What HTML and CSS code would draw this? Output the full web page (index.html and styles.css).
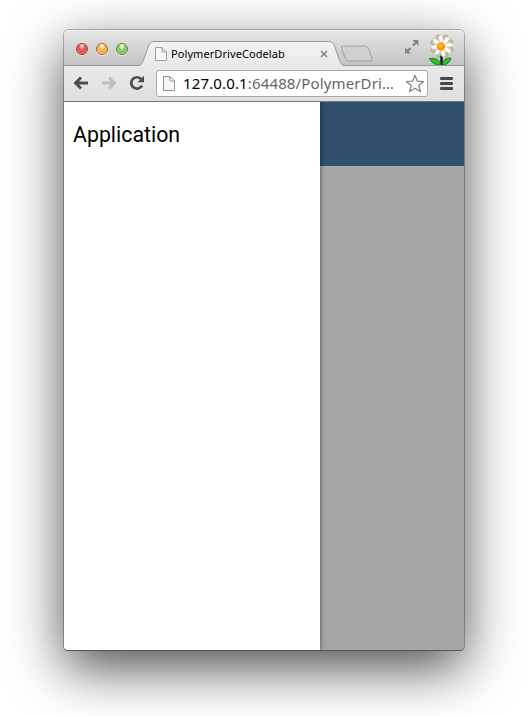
FILE: index.html
```html
<!DOCTYPE html>
<html lang="en">
<head>
<meta charset="utf-8">
<title>PolymerDriveCodelab</title>
<link rel="stylesheet" href="styles.css">
</head>
<body>
<div class="window">
  <header class="tabstrip">
    <div class="lights"><i class="light red"></i><i class="light amber"></i><i class="light green"></i></div>
    <div class="tab">
      <svg class="tab-shape" width="212" height="26" viewBox="0 0 212 26">
        <defs><linearGradient id="tabfill" x2="0" y2="1"><stop stop-color="#f2f2f2"/><stop offset="1" stop-color="#e9e9e9"/></linearGradient></defs>
        <path d="M0 25.5C5 25.5 6 23 7.500 19L12.500 5Q14 .5 18 .5H193Q197 .5 198.500 5L203.500 19C205 23 206 25.500 211 25.500V26H0Z" fill="url(#tabfill)"/>
        <path d="M0 24.500C5 24.500 6 23 7.500 19L12.500 5Q14 .5 18 .5H193Q197 .5 198.500 5L203.500 19C205 23 206 24.500 211 24.500" fill="none" stroke="#999"/>
      </svg>
      <svg class="page-icon" width="12" height="14" viewBox="0 0 12 14"><path d="M.5.500H7L11.500 5V13.500H.5ZM7 .5V5H11.500" fill="#f7f7f7" stroke="#a0a0a0"/></svg>
      <span class="tab-title">PolymerDriveCodelab</span>
      <svg class="close" width="8" height="8" viewBox="0 0 8 8"><path d="M1 1L7 7M7 1L1 7" stroke="#858585" stroke-width="1.600"/></svg>
    </div>
    <svg class="newtab" width="34" height="18" viewBox="0 0 34 18"><path d="M3.500 1H25Q27.500 1 28.500 3.500L32 13.500Q33 16 30 16H9Q6.500 16 5.500 13.500L1.500 3.500Q.5 1 3.500 1Z" fill="#d0d0d0" stroke="#a0a0a0"/></svg>
    <svg class="expand" width="16" height="16" viewBox="0 0 16 16" fill="#858585" stroke="#858585"><path d="M8.500 1H14.500V7ZM1 8.500V14.500H7Z" stroke="none"/><path d="M9 6.500L12 3.500M3 12.500L6.500 9" stroke-width="2.400"/></svg>
    <svg class="flower" width="26" height="31" viewBox="0 0 26 31">
      <path d="M12.500 18V31" stroke="#0c2210" stroke-width="2.500"/>
      <path d="M12 31Q10 23 .5 24.500Q3 31 12 31ZM13.500 31Q14 23.500 22 24Q20 31 13.500 31Z" fill="#2cc32a" stroke="#136b1a" stroke-width=".8"/>
      <g fill="#d3c4a6" stroke="#8f8165" stroke-width=".5" transform="rotate(22 13 12)"><g id="petals"><ellipse cx="13" cy="4.700" rx="2.500" ry="4.600"/><ellipse cx="13" cy="19.300" rx="2.500" ry="4.600"/><ellipse cx="5.700" cy="12" rx="4.600" ry="2.500"/><ellipse cx="20.300" cy="12" rx="4.600" ry="2.500"/></g><use href="#petals" transform="rotate(45 13 12)"/></g>
      <g fill="#fff" stroke="#b3a68c" stroke-width=".4" transform="rotate(-8 13 12)"><g id="front"><ellipse cx="13" cy="6" rx="2.200" ry="5.200"/><ellipse cx="13" cy="18" rx="2.200" ry="5.200"/><ellipse cx="7" cy="12" rx="5.200" ry="2.200"/><ellipse cx="19" cy="12" rx="5.200" ry="2.200"/></g><use href="#front" transform="rotate(45 13 12)"/></g>
      <circle cx="12" cy="12.500" r="4.200" fill="#ff930a"/><circle cx="11.400" cy="11.600" r="2.200" fill="#ffb53a"/>
    </svg>
  </header>
  <nav class="toolbar">
    <svg class="back" width="16" height="14" viewBox="0 0 16 14"><path d="M15 7H2.500M8 1.500L2.500 7L8 12.500" fill="none" stroke="#4c4c4c" stroke-width="2.800"/></svg>
    <svg class="forward" width="16" height="14" viewBox="0 0 16 14"><path d="M1 7H13.500M8 1.500L13.500 7L8 12.500" fill="none" stroke="#bdbdbd" stroke-width="2.800"/></svg>
    <svg class="reload" width="16" height="16" viewBox="0 0 16 16"><path d="M13 10.500A5.700 5.700 0 1 1 12 4" fill="none" stroke="#4c4c4c" stroke-width="2.700"/><path d="M15 .8V7.300H8.500Z" fill="#4c4c4c"/></svg>
    <div class="address">
      <svg width="12" height="15" viewBox="0 0 12 15"><path d="M.5.500H7L11.500 5V14.500H.5ZM7 .5V5H11.500" fill="#f8f8f8" stroke="#929292"/></svg>
      <span class="url"><b>127.0.0.1</b>:64488/PolymerDri…</span>
      <svg class="star" width="20" height="19" viewBox="0 0 20 19"><path d="M10 1.200L12.300 7.100L18.700 7.500L13.800 11.500L15.400 17.600L10 14.200L4.600 17.600L6.200 11.500L1.300 7.500L7.700 7.100Z" fill="#fff" stroke="#808080" stroke-width="1.200" stroke-linejoin="round"/></svg>
    </div>
    <div class="menu"><i></i><i></i><i></i></div>
  </nav>
  <main class="content">
    <aside class="drawer">Application</aside>
    <section class="main-panel"><div class="app-bar"></div></section>
  </main>
</div>
</body>
</html>
```
FILE: styles.css
```css
* { box-sizing: border-box; }
body { margin: 0; height: 716px; padding: 30px 64px; background: #fff; overflow: hidden; }
svg { display: block; flex: none; }
.window {
  width: 400px; height: 620px; display: flex; flex-direction: column;
  border-radius: 5px 5px 4px 4px;
  box-shadow: 0 0 0 1px rgba(0,0,0,.25), 0 18px 54px rgba(0,0,0,.7);
}
.tabstrip {
  height: 36px; flex: none; display: flex; align-items: flex-start;
  border-radius: 5px 5px 0 0; border-bottom: 1px solid #999;
  background: linear-gradient(#e6e6e6, #c4c4c4);
  box-shadow: inset 0 1px #f2f2f2;
}
.lights { display: flex; gap: 8px; margin: 13px 0 0 12px; width: 60px; }
.light { width: 12px; height: 12px; border-radius: 50%; border: 1px solid; box-shadow: 0 1px 0 #eee; }
.red { background: radial-gradient(ellipse at 50% 15%, #fff 0, #f99 20%, #e8484c 50%, #ff9b94 100%); border-color: #a03b3c; }
.amber { background: radial-gradient(ellipse at 50% 15%, #fff 0, #ffe0a0 20%, #f1aa45 50%, #ffe38a 100%); border-color: #a4702e; }
.green { background: radial-gradient(ellipse at 50% 15%, #fff 0, #cdf0b0 20%, #80bd5c 50%, #c9f39e 100%); border-color: #55833d; }
.tab { position: relative; width: 212px; height: 26px; margin-top: 11px; flex: none; display: flex; align-items: center; padding: 0 20px; }
.tab-shape { position: absolute; left: 0; top: 0; }
.page-icon { position: relative; margin-left: -1px; }
.tab-title { position: relative; margin-left: 4px; width: 149px; font: 11px/16px "Noto Sans", sans-serif; letter-spacing: .08px; color: #000; white-space: nowrap; }
.close { position: relative; }
.newtab { margin: 15px 0 0 -8px; }
.expand { margin: 9px 0 0 30px; }
.flower { margin: 4px 0 0 9px; }
.toolbar { height: 36px; flex: none; display: flex; align-items: center; padding: 0 11px 1px 9px; background: linear-gradient(#e9e9e9, #dfdfdf); border-bottom: 1px solid #777; }
.forward { margin-left: 12px; }
.reload { margin-left: 12px; }
.address { width: 272px; height: 27px; margin-left: 11px; padding: 0 2px 0 6px; display: flex; align-items: center; background: #fff; border: 1px solid #aaa; border-radius: 3px; flex: none; }
.url { width: 222px; margin-left: 8px; font: 15px/22px "Noto Sans", sans-serif; letter-spacing: .14px; color: #666; white-space: nowrap; }
.url b { font-weight: 400; color: #000; }
.menu { width: 13px; margin-left: 12px; display: flex; flex-direction: column; gap: 2px; }
.menu i { height: 3px; border-radius: 1px; background: #4a4a4a; }
.content { flex: 1; display: flex; overflow: hidden; border-radius: 0 0 4px 4px; box-shadow: 0 1px #555; }
.drawer { position: relative; width: 256px; padding: 20px 9px; background: #fff; box-shadow: 1px 0 4px rgba(0,0,0,.4); font: 21.33px/26px Roboto, sans-serif; color: #000; }
.main-panel { flex: 1; background: #a6a6a6; }
.app-bar { height: 64px; background: #304e6d; }
```
